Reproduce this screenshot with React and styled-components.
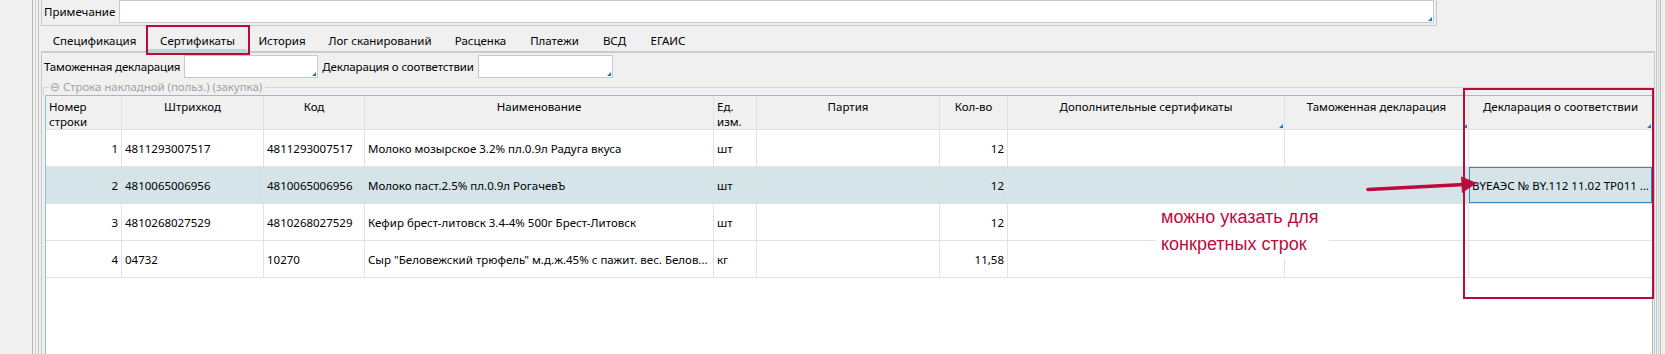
import React from 'react';
import styled, { createGlobalStyle } from 'styled-components';

const GlobalStyle = createGlobalStyle`
  html, body { margin: 0; padding: 0; background: #f0f0f0; }
  body { font-family: "Noto Sans", "Segoe UI", sans-serif; font-size: 11.5px; color: #000; }
  * { box-sizing: border-box; }
`;

const RED = '#bd0a3c';
const COLS = '76px 142px 101px 349px 43px 183px 68px 277px 184px 1fr';

const Screen = styled.div`
  position: relative;
  width: 1665px;
  height: 354px;
  overflow: hidden;
  padding-left: 32px;
  display: flex;
`;

const Frame = styled.div`
  display: flex;
  flex-direction: column;
  height: 100%;
  border-left: 1px solid ${p => p.$c};
  border-right: 1px solid ${p => p.$c};
  padding: 0 1px 0 2px;
  width: ${p => (p.$w ? `${p.$w}px` : 'auto')};
  flex: ${p => (p.$w ? 'none' : '1')};
  min-width: 0;
`;

const NotePanel = styled.div`
  display: flex;
  align-items: flex-start;
  gap: 4px;
  width: 1396px;
  height: 26px;
  padding: 0 2px 0 2px;
  border-left: 1px solid #c8c8c8;
  border-right: 1px solid #c8c8c8;
  border-bottom: 1px solid #c8c8c8;
`;

const Label = styled.span`
  line-height: 23px;
  white-space: nowrap;
  letter-spacing: ${p => (p.$tight ? '-0.15px' : '0')};
`;

const TextInput = styled.div`
  position: relative;
  height: 23px;
  width: ${p => (p.$w ? `${p.$w}px` : 'auto')};
  flex: ${p => (p.$w ? 'none' : '1')};
  background: #fff;
  border: 1px solid #c9c9c9;
  &::after {
    content: '';
    position: absolute;
    right: 1px;
    bottom: 1px;
    border-style: solid;
    border-width: 0 0 4px 4px;
    border-color: transparent transparent #1b78c2 transparent;
  }
`;

const TabStrip = styled.div`
  display: flex;
  height: 25px;
`;

const Tab = styled.div`
  position: relative;
  width: ${p => p.$w}px;
  display: flex;
  align-items: center;
  justify-content: center;
  padding-top: 3px;
  white-space: nowrap;
  z-index: 1;
  ${p => p.$active && `
    &::after {
      content: '';
      position: absolute;
      left: 0; right: 0; bottom: -1px;
      height: 3px;
      background: #b1d8dc;
    }
    &::before {
      content: '';
      position: absolute;
      left: -2px; right: -3px; top: -1px; bottom: -4px;
      border: 2px solid ${RED};
      z-index: 2;
    }
  `}
`;

const TabBody = styled.div`
  flex: 1;
  display: flex;
  flex-direction: column;
  border-top: 2px solid #cbcbcb;
  border-left: 1px solid #c8c8c8;
  border-right: 1px solid #c8c8c8;
  min-height: 0;
`;

const FieldRow = styled.div`
  display: flex;
  align-items: center;
  gap: 4px;
  padding: 2px 0 0 2px;
  height: 25px;
`;

const GroupHeader = styled.div`
  display: flex;
  height: 16px;
  margin-top: 1px;
  padding-left: 1px;
`;

const Corner = styled.div`
  width: 6px;
  height: 8px;
  margin-top: 8px;
  border-top: 1px solid #d6d6d6;
  border-left: 1px solid #d6d6d6;
`;

const Legend = styled.span`
  color: #a3a3a3;
  line-height: 16px;
  padding: 0 3px 0 1px;
  white-space: nowrap;
  letter-spacing: -0.05px;
`;

const GroupLine = styled.div`
  flex: 1;
  height: 1px;
  margin-top: 8px;
  background: #d6d6d6;
`;

const Grid = styled.div`
  flex: 1;
  margin: 0 1px 0 3px;
  background: #fff;
  border: 1px solid #8cc0d6;
  border-bottom: none;
  display: flex;
  flex-direction: column;
`;

const Row = styled.div`
  display: grid;
  grid-template-columns: ${COLS};
  height: ${p => p.$h}px;
  background: ${p => (p.$selected ? '#d4e4e9' : 'transparent')};
`;

const HeadCell = styled.div`
  position: relative;
  background: #f0f0f0;
  border-right: 1px solid #e2e2e2;
  border-bottom: 1px solid #e2e2e2;
  padding: 3px 3px 0;
  line-height: 15px;
  text-align: ${p => p.$align || 'center'};
  white-space: nowrap;
  &:last-child { border-right: none; }
  ${p => p.$mark && `
    &::after {
      content: '';
      position: absolute;
      right: 1px;
      bottom: 1px;
      border-style: solid;
      border-width: 0 0 4px 4px;
      border-color: transparent transparent #1b78c2 transparent;
    }
  `}
`;

const Cell = styled.div`
  display: flex;
  align-items: center;
  justify-content: ${p => (p.$right ? 'flex-end' : 'flex-start')};
  padding: 0 3px;
  border-right: 1px solid #e2e2e2;
  border-bottom: 1px solid #e2e2e2;
  white-space: nowrap;
  overflow: hidden;
  min-width: 0;
  box-shadow: ${p => (p.$current ? 'inset 0 0 0 1px #2c8ac4' : 'none')};
  &:last-child { border-right: none; }
`;

const CellText = styled.span`
  overflow: hidden;
  text-overflow: ellipsis;
`;

const RedFrame = styled.div`
  position: absolute;
  left: 1463px;
  top: 88px;
  width: 191px;
  height: 211px;
  border: 2px solid ${RED};
  pointer-events: none;
`;

const ArrowSvg = styled.svg`
  position: absolute;
  left: 1360px;
  top: 170px;
  overflow: visible;
`;

const Note = styled.div`
  position: absolute;
  left: 1156px;
  top: 204px;
  padding: 0 10px 0 5px;
  background: #fff;
  color: ${RED};
  font-family: "Liberation Sans", Arial, sans-serif;
  font-size: 18px;
  line-height: 27px;
  white-space: nowrap;
`;

const tabs = [
  ['Спецификация', 107],
  ['Сертификаты', 99, true],
  ['История', 70],
  ['Лог сканирований', 126],
  ['Расценка', 75],
  ['Платежи', 73],
  ['ВСД', 47],
  ['ЕГАИС', 60],
];

const header = [
  { t: <>Номер<br />строки</>, a: 'left' },
  { t: 'Штрихкод' },
  { t: 'Код' },
  { t: 'Наименование' },
  { t: <>Ед.<br />изм.</>, a: 'left' },
  { t: 'Партия' },
  { t: 'Кол-во' },
  { t: 'Дополнительные сертификаты', m: true },
  { t: 'Таможенная декларация', m: true },
  { t: 'Декларация о соответствии', m: true },
];

const rows = [
  ['1', '4811293007517', '4811293007517', 'Молоко мозырское 3.2% пл.0.9л Радуга вкуса', 'шт', '', '12', '', '', ''],
  ['2', '4810065006956', '4810065006956', 'Молоко паст.2.5% пл.0.9л РогачевЪ', 'шт', '', '12', '', '', 'BYЕАЭС № BY.112 11.02 ТР011 ...'],
  ['3', '4810268027529', '4810268027529', 'Кефир брест-литовск 3.4-4% 500г Брест-Литовск', 'шт', '', '12', '', '', ''],
  ['4', '04732', '10270', 'Сыр "Беловежский трюфель" м.д.ж.45% с пажит. вес. Белов...', 'кг', '', '11,58', '', '', ''],
];

const rightAligned = [0, 6];

export default function App() {
  return (
    <>
      <GlobalStyle />
      <Screen>
        <Frame $c="#b9b9b9" $w={1629}>
          <Frame $c="#d2d2d2">
            <Frame $c="#c6c6c6">
              <NotePanel>
                <Label>Примечание</Label>
                <TextInput />
              </NotePanel>
              <TabStrip>
                {tabs.map(([t, w, a]) => (
                  <Tab key={t} $w={w} $active={a}>{t}</Tab>
                ))}
              </TabStrip>
              <TabBody>
                <FieldRow>
                  <Label $tight>Таможенная декларация</Label>
                  <TextInput $w={134} />
                  <Label $tight>Декларация о соответствии</Label>
                  <TextInput $w={135} />
                </FieldRow>
                <GroupHeader>
                  <Corner />
                  <Legend>⊖ Строка накладной (польз.) (закупка)</Legend>
                  <GroupLine />
                </GroupHeader>
                <Grid>
                  <Row $h={34}>
                    {header.map((h, i) => (
                      <HeadCell key={i} $align={h.a} $mark={h.m}>{h.t}</HeadCell>
                    ))}
                  </Row>
                  {rows.map((r, ri) => (
                    <Row key={ri} $h={37} $selected={ri === 1}>
                      {r.map((c, ci) => (
                        <Cell key={ci} $right={rightAligned.includes(ci)} $current={ri === 1 && ci === 9}>
                          <CellText>{c}</CellText>
                        </Cell>
                      ))}
                    </Row>
                  ))}
                </Grid>
              </TabBody>
            </Frame>
          </Frame>
        </Frame>
        <RedFrame />
        <ArrowSvg width="125" height="30" viewBox="0 0 125 30">
          <line x1="8" y1="19.5" x2="104" y2="14.5" stroke={RED} strokeWidth="3.5" strokeLinecap="round" />
          <polygon points="101,6.5 117,13 102,23" fill={RED} />
        </ArrowSvg>
        <Note>можно указать для<br />конкретных строк</Note>
      </Screen>
    </>
  );
}
